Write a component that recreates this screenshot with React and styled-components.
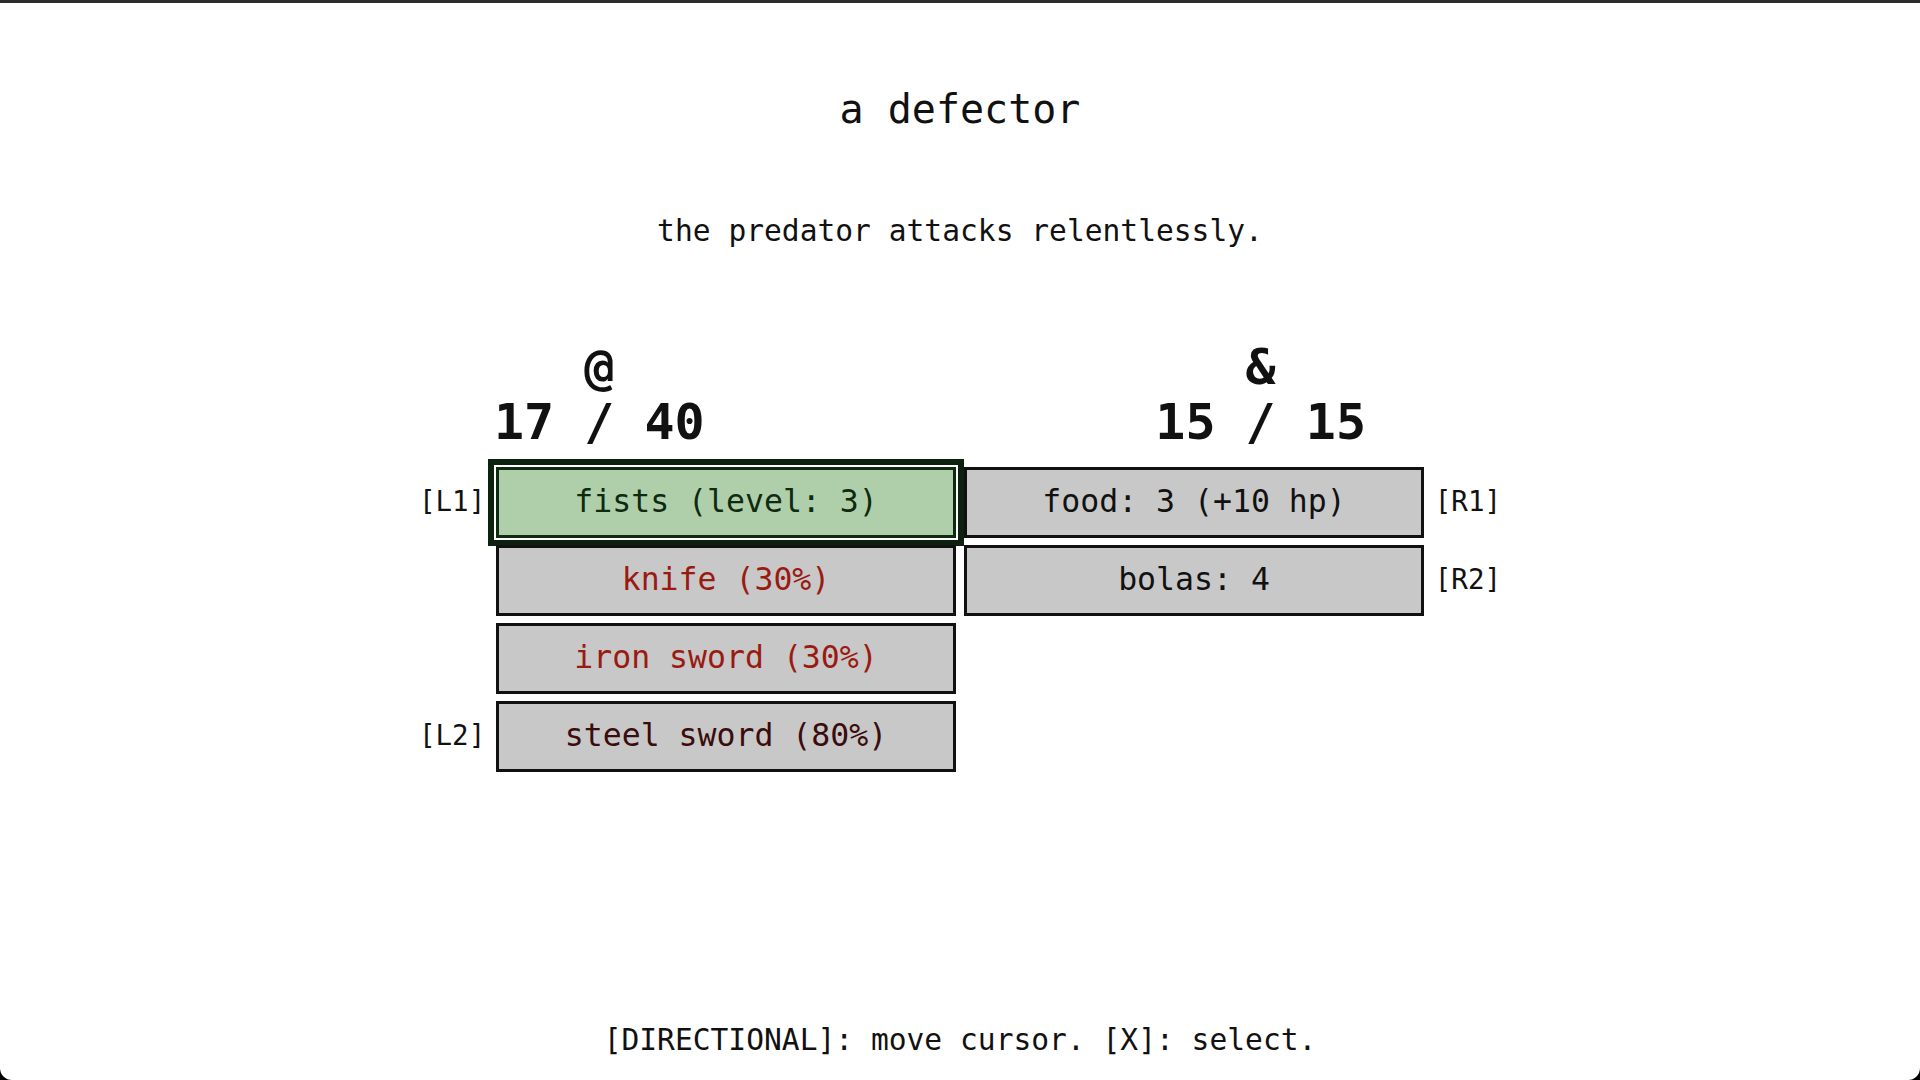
import styled, { createGlobalStyle } from "styled-components";

const GlobalStyle = createGlobalStyle`
  html, body {
    margin: 0;
    padding: 0;
    background: #000;
  }
  body {
    font-family: "DejaVu Sans Mono", "Liberation Mono", monospace;
    color: #111;
  }
`;

const tones = {
  plain: { text: "#111111", fill: "#c8c8c8", border: "#111111" },
  selected: { text: "#0f2a10", fill: "#afcfab", border: "#0f2a10" },
  broken: { text: "#9a1a12", fill: "#c8c8c8", border: "#111111" },
  worn: { text: "#3a0c0c", fill: "#c8c8c8", border: "#111111" },
};

const Screen = styled.main`
  box-sizing: border-box;
  height: 1080px;
  display: flex;
  flex-direction: column;
  align-items: center;
  background: #fff;
  border-top: 3px solid #2c2c2c;
  border-radius: 0 0 12px 12px;
  overflow: hidden;
`;

const Title = styled.h1`
  margin: 82px 0 0;
  font-size: 40px;
  line-height: 48px;
  font-weight: normal;
`;

const Narration = styled.p`
  margin: 80px 0 0;
  font-size: 29.6px;
  line-height: 36px;
`;

const Battle = styled.section`
  margin-top: 91px;
  display: grid;
  grid-template-columns: 66px 460px 460px 66px;
  column-gap: 8px;
  row-gap: 7px;
`;

const Stat = styled.div`
  grid-column: ${(p) => p.$col};
  justify-self: ${(p) => (p.$col === 2 ? "start" : "end")};
  margin-left: ${(p) => (p.$col === 2 ? "-2px" : "0")};
  margin-right: ${(p) => (p.$col === 3 ? "58px" : "0")};
  margin-bottom: 10px;
  text-align: center;
  font-family: "DejaVu Sans Mono", monospace;
  font-weight: bold;
  font-size: 50px;
  line-height: 55px;
  white-space: pre;
`;

const Label = styled.span`
  grid-column: ${(p) => (p.$side === "left" ? 1 : 4)};
  justify-self: ${(p) => (p.$side === "left" ? "start" : "end")};
  align-self: center;
  margin: ${(p) => (p.$side === "left" ? "0 0 4px -3px" : "0 -3px 4px 0")};
  font-size: 27.5px;
  line-height: 32px;
`;

const Option = styled.div`
  grid-column: ${(p) => p.$col};
  box-sizing: border-box;
  height: 71px;
  padding-bottom: 4px;
  display: flex;
  align-items: center;
  justify-content: center;
  border: 3px solid ${(p) => tones[p.$tone].border};
  background: ${(p) => tones[p.$tone].fill};
  color: ${(p) => tones[p.$tone].text};
  font-size: 31.5px;
  white-space: pre;
  box-shadow: ${(p) =>
    p.$tone === "selected" ? "0 0 0 2px #fff, 0 0 0 8px #0d220e" : "none"};
`;

const Hint = styled.footer`
  margin-top: auto;
  margin-bottom: 22px;
  font-size: 29.6px;
  line-height: 36px;
`;

const rows = [
  {
    l: "[L1]",
    left: { text: "fists (level: 3)", tone: "selected" },
    right: { text: "food: 3 (+10 hp)", tone: "plain" },
    r: "[R1]",
  },
  {
    left: { text: "knife (30%)", tone: "broken" },
    right: { text: "bolas: 4", tone: "plain" },
    r: "[R2]",
  },
  { left: { text: "iron sword (30%)", tone: "broken" } },
  { l: "[L2]", left: { text: "steel sword (80%)", tone: "worn" } },
];

const App = () => {
  return (
    <>
      <GlobalStyle />
      <Screen>
        <Title>a defector</Title>
        <Narration>the predator attacks relentlessly.</Narration>
        <Battle>
          <Stat $col={2}>
            @
            <br />
            17 / 40
          </Stat>
          <Stat $col={3}>
            &amp;
            <br />
            15 / 15
          </Stat>
          {rows.map((row, i) => (
            <div key={i} style={{ display: "contents" }}>
              {row.l && <Label $side="left">{row.l}</Label>}
              <Option $col={2} $tone={row.left.tone}>
                {row.left.text}
              </Option>
              {row.right && (
                <Option $col={3} $tone={row.right.tone}>
                  {row.right.text}
                </Option>
              )}
              {row.r && <Label $side="right">{row.r}</Label>}
            </div>
          ))}
        </Battle>
        <Hint>[DIRECTIONAL]: move cursor. [X]: select.</Hint>
      </Screen>
    </>
  );
};

export default App;
